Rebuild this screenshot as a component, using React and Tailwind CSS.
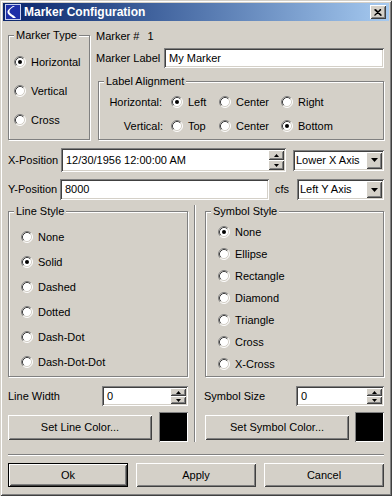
import React from 'react';

const sunken = 'bg-white shadow-[inset_1px_1px_0_#808080,inset_-1px_-1px_0_#ffffff,inset_2px_2px_0_#404040,inset_-2px_-2px_0_#d4d0c8]';
const raised = 'bg-[#d4d0c8] shadow-[inset_1px_1px_0_#ffffff,inset_-1px_-1px_0_#404040,inset_2px_2px_0_#d4d0c8,inset_-2px_-2px_0_#808080]';
const etched = 'border border-[#808080] shadow-[1px_1px_0_#ffffff,inset_1px_1px_0_#ffffff]';

function Radio({ checked }) {
  return (
    <svg width="12" height="12" viewBox="0 0 12 12" className="shrink-0">
      <circle cx="6" cy="6" r="5" fill="#fff" />
      <path d="M2.11 9.89 A5.5 5.5 0 0 1 9.89 2.11" fill="none" stroke="#808080" />
      <path d="M9.89 2.11 A5.5 5.5 0 0 1 2.11 9.89" fill="none" stroke="#fff" />
      <path d="M2.82 9.18 A4.5 4.5 0 0 1 9.18 2.82" fill="none" stroke="#404040" />
      <path d="M9.18 2.82 A4.5 4.5 0 0 1 2.82 9.18" fill="none" stroke="#d4d0c8" />
      {checked && <circle cx="6" cy="6" r="2" fill="#000" />}
    </svg>
  );
}

function Opt({ label, checked, className = '' }) {
  return (
    <div className={`flex items-center h-[14px] ${className}`}>
      <Radio checked={checked} />
      <span className="ml-[5px] whitespace-nowrap">{label}</span>
    </div>
  );
}

function Group({ title, className = '', children }) {
  return (
    <fieldset className={`${etched} ${className}`}>
      <legend className="ml-[5px] px-[2px] leading-[13px] bg-[#d4d0c8]">{title}</legend>
      {children}
    </fieldset>
  );
}

function Spin() {
  return (
    <div className="flex flex-col w-[16px] h-full shrink-0">
      <div className={`${raised} flex-1 flex items-center justify-center`}>
        <svg width="5" height="3" viewBox="0 0 5 3"><path d="M2.5 0L5 3H0Z" fill="#000" /></svg>
      </div>
      <div className={`${raised} flex-1 flex items-center justify-center`}>
        <svg width="5" height="3" viewBox="0 0 5 3"><path d="M0 0H5L2.5 3Z" fill="#000" /></svg>
      </div>
    </div>
  );
}

function Combo({ value, className = '' }) {
  return (
    <div className={`${sunken} ${className} flex items-center p-[2px]`}>
      <span className="flex-1 pl-[1px] whitespace-nowrap">{value}</span>
      <div className={`${raised} w-[16px] h-full flex items-center justify-center`}>
        <svg width="7" height="4" viewBox="0 0 7 4"><path d="M0 0H7L3.5 4Z" fill="#000" /></svg>
      </div>
    </div>
  );
}

function SpinField({ value, className = '' }) {
  return (
    <div className={`${sunken} ${className} flex items-center p-[2px]`}>
      <span className="flex-1 pl-[3px] whitespace-nowrap">{value}</span>
      <Spin />
    </div>
  );
}

function Button({ children, className = '', def }) {
  return (
    <div className={`${raised} ${def ? 'border border-black' : ''} ${className} flex items-center justify-center`}>
      {children}
    </div>
  );
}

export default function App() {
  return (
    <div className="font-['Liberation_Sans',Arial,sans-serif] text-[11px] leading-[13px] text-black w-[392px] h-[496px] bg-[#d4d0c8] shadow-[inset_1px_1px_0_#d4d0c8,inset_-1px_-1px_0_#404040,inset_2px_2px_0_#ffffff,inset_-2px_-2px_0_#808080] flex flex-col">
      {/* Title bar */}
      <div className="mx-[3px] mt-[3px] h-[18px] bg-linear-to-r from-[#0a246a] to-[#a6caf0] flex items-center pl-[2px] pr-[3px]">
        <svg width="16" height="16" viewBox="0 0 16 16" className="shrink-0">
          <rect x="0" y="0" width="16" height="16" fill="#1e2fa8" />
          <rect x="0.5" y="0.5" width="15" height="15" fill="none" stroke="#c8d0f0" />
          <path d="M10 2 C6 4 4 6 4.5 8 C5 10 9 11 11 14 L8 14 C6 12 2.5 10.5 2.5 8 C2.5 5.5 6 3.5 8 2 Z" fill="#fff" />
        </svg>
        <span className="ml-[3px] flex-1 text-white font-bold text-[12px]">Marker Configuration</span>
        <div className={`${raised} w-[16px] h-[14px] flex items-center justify-center`}>
          <svg width="8" height="7" viewBox="0 0 8 7">
            <path d="M0.5 0.5L7 6.5M1.5 0.5L7.5 6.5M7 0.5L0.5 6.5M6.5 0.5L0.5 6.5" stroke="#000" strokeWidth="1.1" fill="none" />
          </svg>
        </div>
      </div>

      <div className="px-[8px] flex flex-col">
        {/* Top row */}
        <div className="flex mt-[8px]">
          <Group title="Marker Type" className="w-[82px] h-[111px] shrink-0">
            <div className="flex flex-col pl-[5px] pt-[13px] gap-[15px]">
              <Opt label="Horizontal" checked />
              <Opt label="Vertical" />
              <Opt label="Cross" />
            </div>
          </Group>
          <div className="ml-[6px] flex-1 flex flex-col">
            <div className="h-[14px] leading-[14px] flex">
              Marker #<span className="ml-[8px]">1</span>
            </div>
            <div className="mt-[5px] flex items-center h-[20px]">
              <span className="w-[68px]">Marker Label</span>
              <div className={`${sunken} flex-1 h-full flex items-center pl-[5px]`}>My Marker</div>
            </div>
            <Group title="Label Alignment" className="mt-[7px] ml-[2px] h-[65px]">
              <div className="flex items-center h-[14px] mt-[7px]">
                <span className="w-[63px] text-right">Horizontal:</span>
                <Opt label="Left" checked className="ml-[9px] w-[48px]" />
                <Opt label="Center" className="w-[62px]" />
                <Opt label="Right" />
              </div>
              <div className="flex items-center h-[14px] mt-[10px]">
                <span className="w-[64px] text-right">Vertical:</span>
                <Opt label="Top" className="ml-[8px] w-[48px]" />
                <Opt label="Center" className="w-[62px]" />
                <Opt label="Bottom" checked />
              </div>
            </Group>
          </div>
        </div>

        {/* X position */}
        <div className="mt-[8px] flex items-center h-[24px]">
          <span className="w-[53px]">X-Position</span>
          <SpinField value="12/30/1956 12:00:00 AM" className="w-[225px] h-full" />
          <Combo value="Lower X Axis" className="ml-[7px] w-[91px] h-[21px]" />
        </div>

        {/* Y position */}
        <div className="mt-[7px] flex items-center h-[21px]">
          <span className="w-[52px]">Y-Position</span>
          <div className={`${sunken} w-[209px] h-full flex items-center pl-[5px]`}>8000</div>
          <span className="ml-[6px] w-[22px]">cfs</span>
          <Combo value="Left Y Axis" className="w-[87px] h-full" />
        </div>

        {/* Styles */}
        <div className="mt-[5px] flex">
          <div className="w-[180px] flex flex-col shrink-0">
            <Group title="Line Style" className="h-[172px]">
              <div className="flex flex-col pl-[12px] pt-[12px] gap-[11px]">
                <Opt label="None" />
                <Opt label="Solid" checked />
                <Opt label="Dashed" />
                <Opt label="Dotted" />
                <Opt label="Dash-Dot" />
                <Opt label="Dash-Dot-Dot" />
              </div>
            </Group>
            <div className="mt-[9px] flex items-center h-[20px]">
              <span className="w-[94px]">Line Width</span>
              <SpinField value="0" className="w-[86px] h-full" />
            </div>
            <div className="mt-[6px] flex items-center h-[30px]">
              <Button className="w-[144px] h-[25px]">Set Line Color...</Button>
              <div className="ml-[7px] w-[29px] h-[30px] bg-black shadow-[inset_1px_1px_0_#808080,inset_-1px_-1px_0_#ffffff]" />
            </div>
          </div>

          <div className="ml-[6px] w-[2px] border-l border-l-[#808080] border-r border-r-white" />

          <div className="ml-[9px] w-[179px] flex flex-col shrink-0">
            <Group title="Symbol Style" className="h-[172px]">
              <div className="flex flex-col pl-[12px] pt-[7px] gap-[8px]">
                <Opt label="None" checked />
                <Opt label="Ellipse" />
                <Opt label="Rectangle" />
                <Opt label="Diamond" />
                <Opt label="Triangle" />
                <Opt label="Cross" />
                <Opt label="X-Cross" />
              </div>
            </Group>
            <div className="mt-[9px] flex items-center h-[20px]">
              <span className="w-[92px] -ml-[1px]">Symbol Size</span>
              <SpinField value="0" className="w-[88px] h-full" />
            </div>
            <div className="mt-[6px] flex items-center h-[30px]">
              <Button className="w-[144px] h-[25px]">Set Symbol Color...</Button>
              <div className="ml-[6px] w-[29px] h-[30px] bg-black shadow-[inset_1px_1px_0_#808080,inset_-1px_-1px_0_#ffffff]" />
            </div>
          </div>
        </div>

        {/* Separator */}
        <div className="mt-[12px] h-[2px] border-t border-t-[#808080] border-b border-b-white" />

        {/* Buttons */}
        <div className="mt-[7px] flex gap-[8px]">
          <Button def className="w-[120px] h-[24px]">Ok</Button>
          <Button className="w-[120px] h-[24px]">Apply</Button>
          <Button className="w-[120px] h-[24px]">Cancel</Button>
        </div>
      </div>
    </div>
  );
}
